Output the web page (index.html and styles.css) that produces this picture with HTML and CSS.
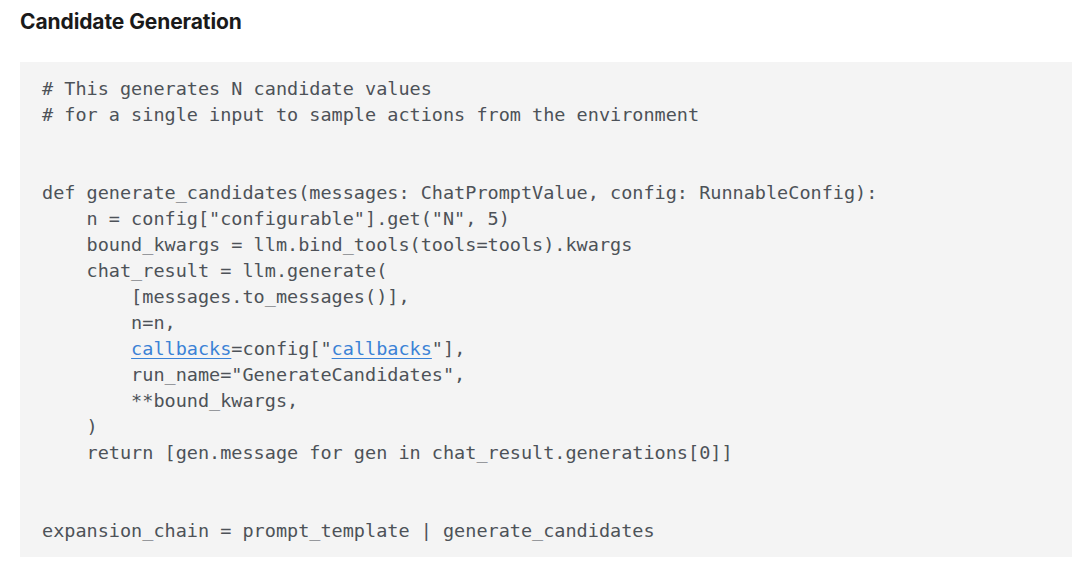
FILE: index.html
```html
<!DOCTYPE html>
<html>
<head>
<meta charset="utf-8">
<link rel="stylesheet" href="styles.css">
</head>
<body>
<div class="page">
<h3 class="title">Candidate Generation</h3>
<pre class="code"># This generates N candidate values
# for a single input to sample actions from the environment


def generate_candidates(messages: ChatPromptValue, config: RunnableConfig):
    n = config["configurable"].get("N", 5)
    bound_kwargs = llm.bind_tools(tools=tools).kwargs
    chat_result = llm.generate(
        [messages.to_messages()],
        n=n,
        <span class="lnk">callbacks</span>=config["<span class="lnk">callbacks</span>"],
        run_name="GenerateCandidates",
        **bound_kwargs,
    )
    return [gen.message for gen in chat_result.generations[0]]


expansion_chain = prompt_template | generate_candidates</pre>
</div>
</body>
</html>
```
FILE: styles.css
```css
html, body {
  margin: 0;
  padding: 0;
  background: #ffffff;
}
.page {
  padding: 10px 8px 0 20px;
  font-family: Inter, "Liberation Sans", sans-serif;
}
.title {
  margin: 0;
  font-size: 21px;
  line-height: 24px;
  font-weight: 700;
  color: #1a1a1a;
  letter-spacing: -0.1px;
}
.code {
  margin: 28px 0 0 0;
  padding: 14px 22px 13px 22px;
  background: #f4f4f4;
  font-family: "DejaVu Sans Mono", "Liberation Mono", monospace;
  font-size: 18.5px;
  line-height: 26px;
  color: #4d5258;
  white-space: pre;
}
.lnk {
  color: #3b82d6;
  text-decoration: underline;
  text-underline-offset: 3px;
}
```
